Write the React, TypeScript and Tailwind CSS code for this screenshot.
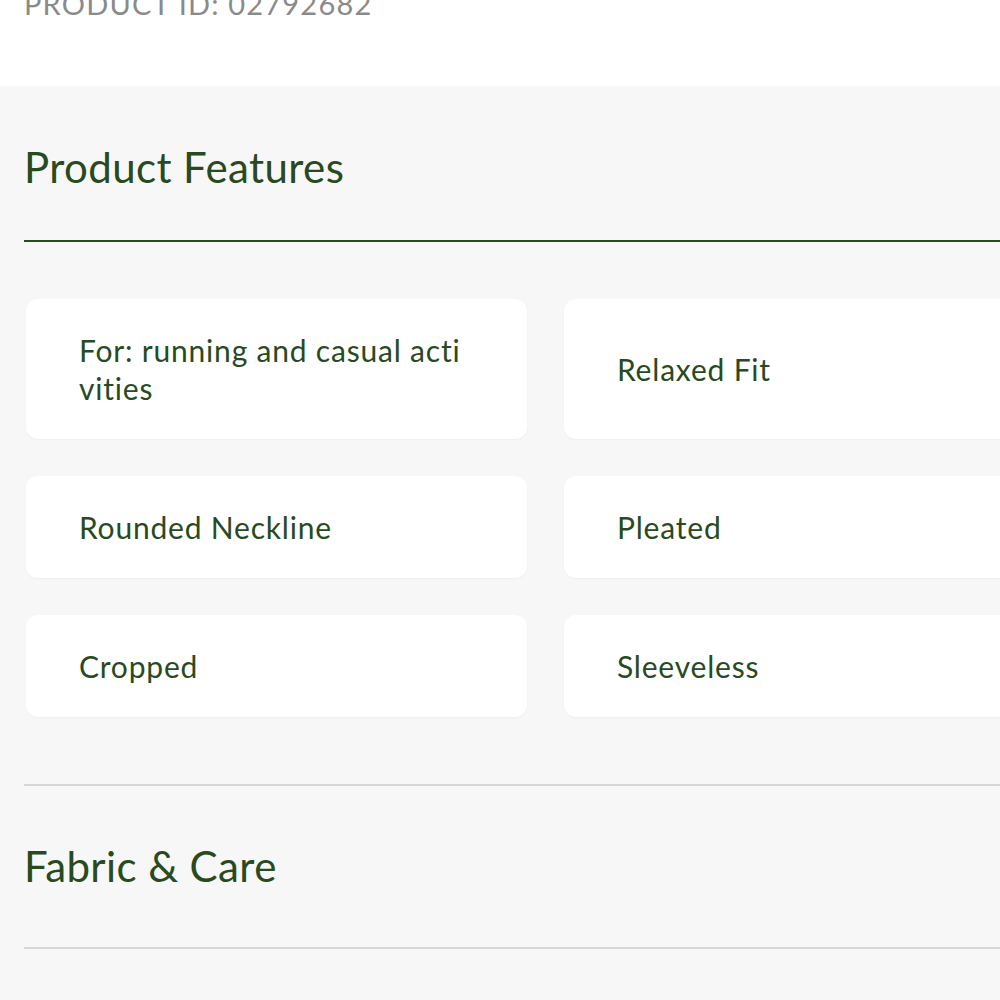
import React from 'react';

const features = [
  ['For: running and casual acti', 'vities'],
  ['Relaxed Fit'],
  ['Rounded Neckline'],
  ['Pleated'],
  ['Cropped'],
  ['Sleeveless'],
];

export default function App() {
  return (
    <div className="w-[1000px] h-[1000px] overflow-hidden bg-[#f7f7f7] font-['Lato','Noto_Sans',sans-serif]">
      {/* top info strip, the id line is scrolled partly out of view */}
      <div className="h-[86px] bg-white pl-6 overflow-hidden">
        <div className="-translate-y-[16px] text-[29px] leading-[40px] tracking-[1.2px] text-[#8a8a8a] uppercase">Product ID: 02792682</div>
      </div>

      <div className="w-[1100px] pl-6">
        <h2 className="pt-[54px] pb-[46px] text-[42px] leading-[54px] tracking-[0.4px] text-[#284a1e]">Product Features</h2>
        <div className="h-[2px] bg-[#284a1e]" />

        <div className="mt-[57px] ml-[2px] grid grid-cols-[501px_501px] gap-x-[37px] gap-y-[37px]">
          {features.map((f, i) => (
            <div
              key={i}
              className="flex items-center rounded-xl bg-white pl-[53px] py-[32px] shadow-[0_1px_2px_rgba(0,0,0,0.04)]"
            >
              <div className="text-[30px] leading-[38px] tracking-[0.8px] text-[#284a1e]">
                {f.map((line, j) => (
                  <div key={j}>{line}</div>
                ))}
              </div>
            </div>
          ))}
        </div>

        <div className="mt-[67px] h-[2px] bg-[#d6d6d6]" />
        <h2 className="pt-[41px] pb-[42px] text-[42px] leading-[78px] tracking-[0.4px] text-[#284a1e]">Fabric &amp; Care</h2>
        <div className="h-[2px] bg-[#d6d6d6]" />
      </div>
    </div>
  );
}
